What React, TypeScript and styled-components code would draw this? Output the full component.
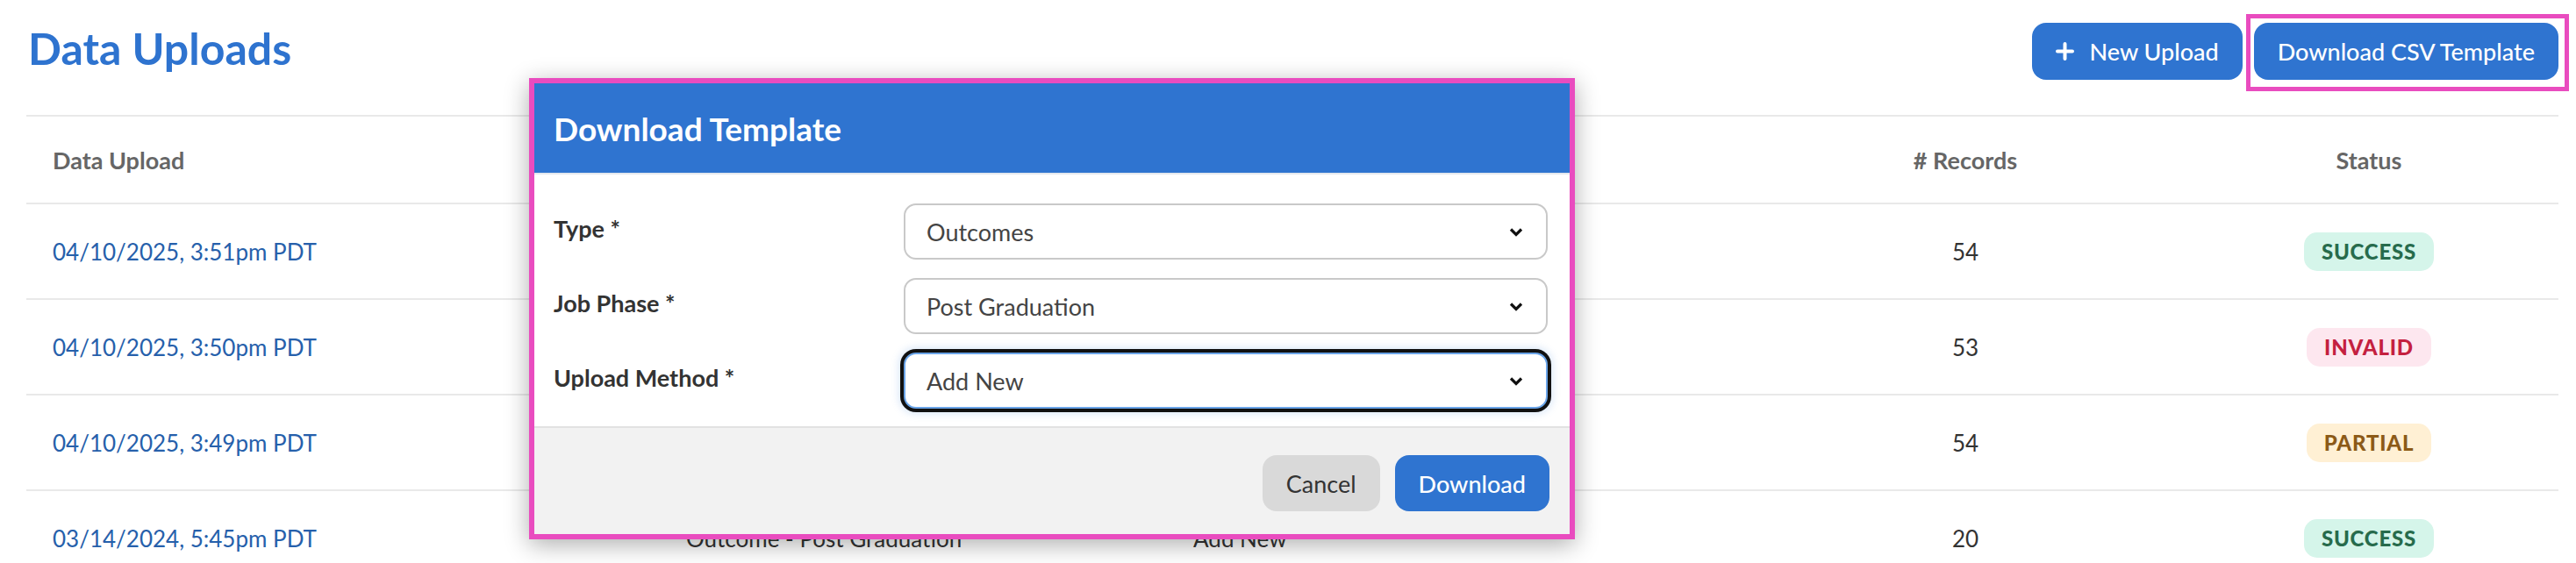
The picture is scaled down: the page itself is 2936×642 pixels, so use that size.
import styled, { createGlobalStyle } from 'styled-components';

type Upload = {
  date: string;
  type: string;
  method: string;
  records: number;
  status: 'success' | 'invalid' | 'partial';
};

const uploads: Upload[] = [
  { date: '04/10/2025, 3:51pm PDT', type: 'Outcome - Post Graduation', method: 'Add New', records: 54, status: 'success' },
  { date: '04/10/2025, 3:50pm PDT', type: 'Outcome - Post Graduation', method: 'Add New', records: 53, status: 'invalid' },
  { date: '04/10/2025, 3:49pm PDT', type: 'Outcome - Post Graduation', method: 'Add New', records: 54, status: 'partial' },
  { date: '03/14/2024, 5:45pm PDT', type: 'Outcome - Post Graduation', method: 'Add New', records: 20, status: 'success' },
];

const fields = [
  { label: 'Type *', value: 'Outcomes' },
  { label: 'Job Phase *', value: 'Post Graduation' },
  { label: 'Upload Method *', value: 'Add New', focused: true },
];

const Chevron = () => (
  <svg width="16" height="11" viewBox="0 0 16 11" fill="none">
    <path d="M2 2.5 L8 8.5 L14 2.5" stroke="#111" strokeWidth="3.2" />
  </svg>
);

const Plus = () => (
  <svg width="21" height="21" viewBox="0 0 21 21" fill="none">
    <path d="M10.5 2 V19 M2 10.5 H19" stroke="#fff" strokeWidth="4" strokeLinecap="round" />
  </svg>
);

const App = () => {
  return (
    <>
      <GlobalStyle />
      <Page>
        <TopBar>
          <Title>Data Uploads</Title>
          <Actions>
            <PrimaryButton>
              <Plus />
              New Upload
            </PrimaryButton>
            <Highlight>
              <PrimaryButton>Download CSV Template</PrimaryButton>
            </Highlight>
          </Actions>
        </TopBar>

        <Table>
          <HeadRow>
            <HeadCell>Data Upload</HeadCell>
            <HeadCell>Type</HeadCell>
            <HeadCell>Upload Method</HeadCell>
            <HeadCell $center># Records</HeadCell>
            <HeadCell $center>Status</HeadCell>
          </HeadRow>
          {uploads.map((u) => (
            <Row key={u.date}>
              <Cell>
                <DateLink>{u.date}</DateLink>
              </Cell>
              <Cell>{u.type}</Cell>
              <Cell>{u.method}</Cell>
              <Cell $center>{u.records}</Cell>
              <Cell $center>
                <Badge $status={u.status}>{u.status}</Badge>
              </Cell>
            </Row>
          ))}
        </Table>

        <Modal>
          <ModalHeader>Download Template</ModalHeader>
          <ModalBody>
            {fields.map((f) => (
              <FieldRow key={f.label}>
                <FieldLabel>{f.label}</FieldLabel>
                <Select $focused={f.focused}>
                  <span>{f.value}</span>
                  <Chevron />
                </Select>
              </FieldRow>
            ))}
          </ModalBody>
          <ModalFooter>
            <CancelButton>Cancel</CancelButton>
            <PrimaryButton $compact>Download</PrimaryButton>
          </ModalFooter>
        </Modal>
      </Page>
    </>
  );
};

export default App;

const GlobalStyle = createGlobalStyle`
  body {
    margin: 0;
    background: #ffffff;
    font-family: Lato, 'Noto Sans', sans-serif;
    color: #333333;
  }
`;

const Page = styled.div`
  position: relative;
  padding: 0 20px 0 30px;
  height: 642px;
  overflow: hidden;
`;

const TopBar = styled.header`
  display: flex;
  justify-content: space-between;
  align-items: flex-start;
  height: 131px;
`;

const Title = styled.h1`
  margin: 26px 0 0 2px;
  font-size: 50px;
  line-height: 58px;
  font-weight: 700;
  color: #2e73cf;
`;

const Actions = styled.div`
  display: flex;
  align-items: flex-start;
  gap: 4px;
  margin-right: -12px;
`;

const PrimaryButton = styled.button<{ $compact?: boolean }>`
  display: flex;
  align-items: center;
  gap: 18px;
  height: 65px;
  margin-top: ${({ $compact }) => ($compact ? '0' : '26px')};
  padding: 0 27px;
  border: none;
  border-radius: 16px;
  background: #2f74d0;
  color: #ffffff;
  font-family: Lato, sans-serif;
  font-size: 27px;
  font-weight: 500;
`;

const Highlight = styled.div`
  margin-top: 16px;
  padding: 5px 7px 8px 4px;
  border: 5px solid #e94cbf;

  ${PrimaryButton} {
    margin-top: 0;
  }
`;

const Table = styled.div`
  border-top: 2px solid #e9e9e9;
`;

const HeadRow = styled.div`
  display: grid;
  grid-template-columns: 722px 578px 666px 488px 1fr;
  align-items: center;
  height: 98px;
  border-bottom: 2px solid #e9e9e9;
`;

const Row = styled(HeadRow)`
  height: 107px;
`;

const HeadCell = styled.div<{ $center?: boolean }>`
  padding: 0 30px;
  font-size: 27px;
  font-weight: 700;
  color: #666666;
  text-align: ${({ $center }) => ($center ? 'center' : 'left')};
`;

const Cell = styled.div<{ $center?: boolean }>`
  padding: 0 30px;
  font-size: 26px;
  color: #333333;
  text-align: ${({ $center }) => ($center ? 'center' : 'left')};
`;

const DateLink = styled.a`
  color: #2660ab;
  text-decoration: none;
`;

const badgeColors = {
  success: { bg: '#d5f5ea', fg: '#276b4c' },
  invalid: { bg: '#fde7ef', fg: '#c4203f' },
  partial: { bg: '#fff0d4', fg: '#8c5a17' },
};

const Badge = styled.span<{ $status: keyof typeof badgeColors }>`
  display: inline-block;
  height: 44px;
  line-height: 44px;
  padding: 0 20px;
  border-radius: 15px;
  background: ${({ $status }) => badgeColors[$status].bg};
  color: ${({ $status }) => badgeColors[$status].fg};
  font-size: 24px;
  font-weight: 900;
  letter-spacing: 0.8px;
  text-transform: uppercase;
`;

const Modal = styled.section`
  position: absolute;
  left: 603px;
  top: 89px;
  width: 1180px;
  border: 6px solid #e94cbf;
  background: #ffffff;
  box-shadow: 0 6px 26px rgba(0, 0, 0, 0.32);
`;

const ModalHeader = styled.h2`
  display: flex;
  align-items: center;
  height: 102px;
  margin: 0;
  padding: 0 22px;
  border-bottom: 2px solid #e4e8ee;
  background: #2f74d0;
  color: #ffffff;
  font-size: 37px;
  font-weight: 700;
`;

const ModalBody = styled.div`
  display: flex;
  flex-direction: column;
  gap: 21px;
  padding: 33px 25px 20px 22px;
`;

const FieldRow = styled.div`
  display: grid;
  grid-template-columns: 399px 1fr;
  align-items: center;
`;

const FieldLabel = styled.label`
  padding-bottom: 8px;
  font-size: 27px;
  font-weight: 700;
  color: #333333;
`;

const Select = styled.div<{ $focused?: boolean }>`
  display: flex;
  justify-content: space-between;
  align-items: center;
  box-sizing: border-box;
  height: 64px;
  padding: 0 26px 0 24px;
  border: 2px solid ${({ $focused }) => ($focused ? '#6aa4e8' : '#c9c9c9')};
  border-radius: 14px;
  background: #ffffff;
  font-size: 27px;
  color: #444444;
  box-shadow: ${({ $focused }) =>
    $focused ? '0 0 0 4px #111111, 0 0 8px 6px rgba(90, 150, 225, 0.22)' : 'none'};
`;

const ModalFooter = styled.div`
  display: flex;
  justify-content: flex-end;
  gap: 17px;
  padding: 31px 23px 26px;
  border-top: 2px solid #e2e2e2;
  background: #f2f2f2;

  ${PrimaryButton} {
    height: 64px;
  }
`;

const CancelButton = styled.button`
  height: 64px;
  padding: 0 27px;
  border: none;
  border-radius: 16px;
  background: #d9d9d9;
  color: #333333;
  font-family: Lato, sans-serif;
  font-size: 27px;
`;
